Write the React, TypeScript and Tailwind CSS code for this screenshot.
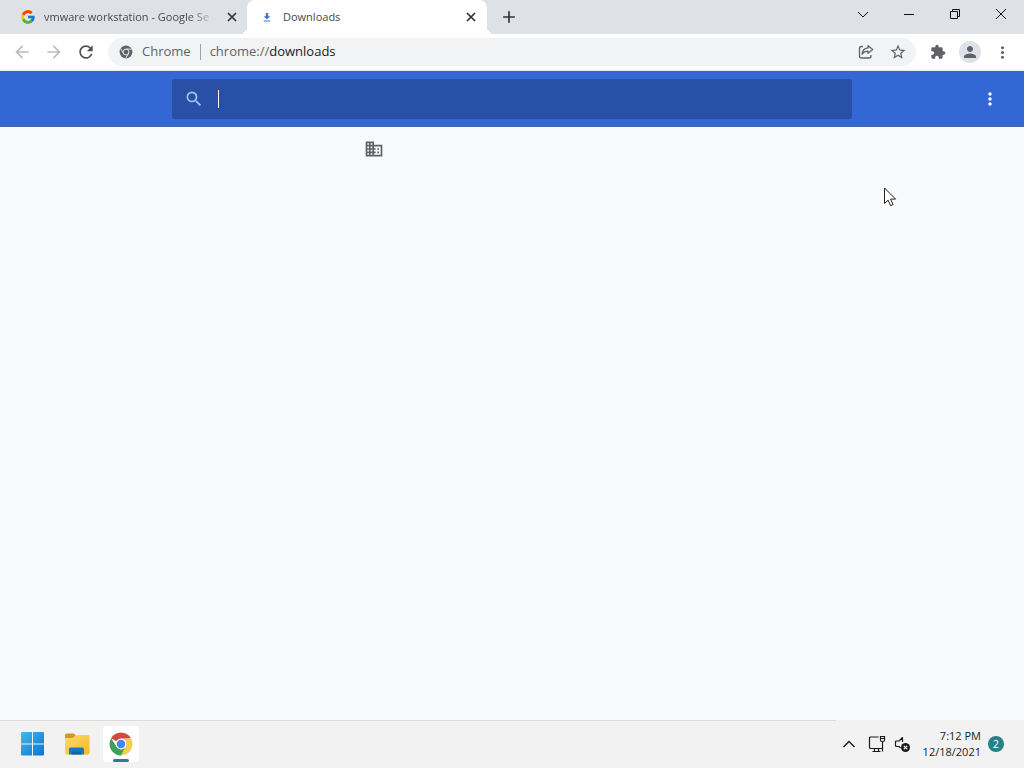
import React from "react";
import { FcGoogle } from "react-icons/fc";
import {
  MdArrowBack,
  MdArrowForward,
  MdDomain,
  MdExtension,
  MdMoreVert,
  MdPerson,
  MdAdd,
  MdRefresh,
  MdSearch,
  MdStarBorder,
} from "react-icons/md";

// Small glyphs
const CloseIcon = () => (
  <svg width="14" height="14" viewBox="0 0 14 14" fill="none" stroke="#303236" strokeWidth="1.700">
    <path d="M3 3 11 11M11 3 3 11" />
  </svg>
);

const ShareIcon = () => (
  <svg width="16" height="16" viewBox="0 0 16 16" fill="none" stroke="#5f6368" strokeWidth="1.3" strokeLinejoin="round">
    <path d="M5 2.500H3.500Q1.500 2.500 1.500 4.500v7.500q0 2 2 2h7.500q2 0 2-2V11" />
    <path d="M10 1.700 14.700 5.500 10 9.300V7.200Q6 7.200 4 10.200 4.500 4.400 10 3.900Z" />
  </svg>
);

const DownloadIcon = () => (
  <svg width="16" height="16" viewBox="0 0 16 16" fill="#3f78c9">
    <path d="M6.800 4h2.400v3.200H11.300L8 10.500 4.700 7.200h2.100zM4.700 11.500h6.600v1H4.700z" />
  </svg>
);

const ChromeGrayIcon = () => (
  <svg width="14" height="14" viewBox="0 0 24 24" fill="none">
    <circle cx="12" cy="12" r="11" fill="#5f6368" />
    <g stroke="#f1f3f4" strokeWidth="1.5">
      <circle cx="12" cy="12" r="5" />
      <path d="M12 7h10M7.700 14.500 2.700 5.800M16.300 14.500l-5 8.700" />
    </g>
    <circle cx="12" cy="12" r="2.800" fill="#5f6368" />
  </svg>
);

const ChromeIcon = () => (
  <svg width="24" height="24" viewBox="0 0 48 48">
    <path d="M24 24 4.100 12.500A23 23 0 0 1 43.900 12.500L24 13.500Z" fill="#d04a40" />
    <path d="M24 13.500h20.400A23 23 0 0 1 24 47L33.100 29.200Z" fill="#f6cc4b" />
    <path d="M4.100 12.500 14.900 29.200 24 34.500 33.100 29.200 24 47A23 23 0 0 1 4.100 12.500Z" fill="#3f9e57" />
    <circle cx="24" cy="24" r="10.800" fill="#fff" />
    <circle cx="24" cy="24" r="8.400" fill="#4285f4" />
  </svg>
);

const WindowsIcon = () => (
  <svg width="24" height="24" viewBox="0 0 24 24">
    <defs>
      <linearGradient id="win" x1="0" y1="0" x2="24" y2="24" gradientUnits="userSpaceOnUse">
        <stop stopColor="#42b8ec" />
        <stop offset="1" stopColor="#0873cc" />
      </linearGradient>
    </defs>
    <path
      d="M1 0H11V11.500H0V1q0-1 1-1ZM12 0h10q1 0 1 1v10.500h-11ZM0 12.500h11V23.500h-10q-1 0-1-1ZM12 12.500h11V22.500q0 1-1 1h-10Z"
      fill="url(#win)"
    />
  </svg>
);

const FolderIcon = () => (
  <svg width="26" height="24" viewBox="0 0 26 24">
    <defs>
      <linearGradient id="folder" x1="0" y1="0" x2="1" y2="1">
        <stop stopColor="#ffdc68" />
        <stop offset="1" stopColor="#f3b929" />
      </linearGradient>
    </defs>
    <path d="M1 3q0-1.500 1.500-1.500h7q1 0 1.500 1l.5 1V7H1Z" fill="#cf9a2c" />
    <path d="M1 6h8l3-3h12q1.500 0 1.500 1.500v16q0 2-1.500 2H2.500q-1.500 0-1.500-2Z" fill="url(#folder)" />
    <path d="M5 22.500v-5.500q0-1.500 1.500-1.500h12q1.500 0 1.500 1.500v5.500Z" fill="#1976c5" />
    <path d="M8 22.500v-2q0-1 1-1h7q1 0 1 1v2Z" fill="#1464ab" />
  </svg>
);

const NetworkIcon = () => (
  <svg width="18" height="18" viewBox="0 0 18 18" fill="none" stroke="#1b1b1b" strokeWidth="1.200">
    <path d="M10.500 2H2.500Q1.500 2 1.500 3v9.500q0 1 1 1h11.500M4.500 16.500h8M6.500 13.500v3M10.500 13.500v3" />
    <path d="M12.500 1.500h4v3.500q0 1.500-1.500 1.500h-1q-1.500 0-1.500-1.500zM12.500 3.500h4M14.500 6.500v10" />
  </svg>
);

const VolumeIcon = () => (
  <svg width="18" height="18" viewBox="0 0 18 18" fill="none" stroke="#1b1b1b" strokeWidth="1.200" strokeLinejoin="round">
    <path d="M8.500 7V2.500L5 6H2.500Q1.500 6 1.500 7v3.500q0 1 1 1H5l1.500 1.700" />
    <circle cx="11.500" cy="12.500" r="4.500" fill="#1b1b1b" stroke="none" />
    <path d="m9.800 10.800 3.400 3.400m0-3.400-3.400 3.400" stroke="#fff" />
  </svg>
);

const windowButtons = [
  { label: "Search tabs", d: "M1 4 6 9 11 4" },
  { label: "Minimize", d: "M1 6.500H11" },
  { label: "Restore", d: "M1.500 3.500h7v7h-7zM3.500 3.500v-2h7v7h-2" },
  { label: "Close", d: "M1 1 11 11M11 1 1 11" },
];

const TabStrip: React.FC = () => (
  <div className="flex h-[34px] bg-[#dee1e6] pl-2">
    <div className="flex w-[239px] items-center pr-2 pl-3">
      <FcGoogle size={16} className="shrink-0" />
      <span className="ml-2 text-[11px] whitespace-nowrap text-[#45484c] [mask-image:linear-gradient(to_right,black_88%,transparent_104%)]">
        vmware workstation - Google Se
      </span>
      <button aria-label="Close tab" className="ml-auto">
        <CloseIcon />
      </button>
    </div>
    <div className="relative flex w-[240px] items-center rounded-t-lg bg-white pr-[9px] pl-3 before:absolute before:bottom-0 before:-left-2 before:size-2 before:rounded-br-lg before:shadow-[4px_4px_0_white] before:[clip-path:inset(0)] after:absolute after:-right-2 after:bottom-0 after:size-2 after:rounded-bl-lg after:shadow-[-4px_4px_0_white] after:[clip-path:inset(0)]">
      <DownloadIcon />
      <span className="ml-2 text-[11px] text-[#45484c]">Downloads</span>
      <button aria-label="Close tab" className="ml-auto">
        <CloseIcon />
      </button>
    </div>
    <button aria-label="New tab" className="ml-3 text-[#303236]">
      <MdAdd size={20} />
    </button>
    <div className="ml-auto flex h-7">
      {windowButtons.map((b) => (
        <button key={b.label} aria-label={b.label} className="flex w-[46px] items-center justify-center">
          <svg width="12" height="12" viewBox="0 0 12 12" fill="none" stroke="#111">
            <path d={b.d} />
          </svg>
        </button>
      ))}
    </div>
  </div>
);

const navButton = "flex size-7 shrink-0 items-center justify-center rounded-full";

const Toolbar: React.FC = () => (
  <div className="flex h-[37px] items-center gap-1 border-b border-[#e3eaf5] bg-white px-2 text-[#5f6368]">
    <button aria-label="Back" className={`${navButton} text-[#babcbe]`}>
      <MdArrowBack size={20} />
    </button>
    <button aria-label="Forward" className={`${navButton} text-[#babcbe]`}>
      <MdArrowForward size={20} />
    </button>
    <button aria-label="Reload" className={`${navButton} text-[#4b4e52]`}>
      <MdRefresh size={20} />
    </button>
    <div className="mx-1 flex h-7 flex-1 items-center rounded-full bg-[#f1f3f4] pr-1 pl-[11px] text-[13px]">
      <ChromeGrayIcon />
      <span className="ml-[9px]">Chrome</span>
      <span className="mx-[9px] h-4 w-px bg-[#9aa0a6]" />
      <span>
        chrome://<span className="text-[#202124]">downloads</span>
      </span>
      <div className="ml-auto flex gap-1">
        <button aria-label="Share" className={navButton}>
          <ShareIcon />
        </button>
        <button aria-label="Bookmark" className={navButton}>
          <MdStarBorder size={18} />
        </button>
      </div>
    </div>
    <button aria-label="Extensions" className={navButton}>
      <MdExtension size={16} />
    </button>
    <button aria-label="Profile" className={navButton}>
      <span className="flex size-[22px] items-center justify-center rounded-full bg-[#dee1e6]">
        <MdPerson size={18} />
      </span>
    </button>
    <button aria-label="Menu" className={navButton}>
      <MdMoreVert size={19} />
    </button>
  </div>
);

const DownloadsHeader: React.FC = () => (
  <header className="grid h-14 grid-cols-[1fr_minmax(0,680px)_1fr] items-center border-b border-[#4a63ab] bg-[#3367d6]">
    <label className="col-start-2 flex h-10 items-center rounded-xs bg-[#2850a7] pl-3">
      <MdSearch size={20} className="text-[#a9c2f4]" />
      <span className="ml-[14px] h-[18px] w-px bg-white" />
      <input
        type="text"
        aria-label="Search downloads"
        className="h-full flex-1 bg-transparent text-sm text-white outline-none"
      />
    </label>
    <button aria-label="More actions" className="mr-6 justify-self-end text-white">
      <MdMoreVert size={20} />
    </button>
  </header>
);

const Taskbar: React.FC = () => (
  <footer className="flex h-12 bg-[#f2f2f2] text-[#1b1b1b]">
    <div className="flex flex-1 items-center gap-2 border-t border-[#d9dbde] pb-px pl-[15px]">
      <button aria-label="Start" className="flex size-9 items-center justify-center">
        <WindowsIcon />
      </button>
      <button aria-label="File Explorer" className="flex size-9 items-center justify-center">
        <FolderIcon />
      </button>
      <button
        aria-label="Google Chrome"
        className="relative flex size-9 items-center justify-center rounded-sm bg-white"
      >
        <ChromeIcon />
        <span className="absolute bottom-0 h-[3px] w-4 rounded-full bg-[#23828a]" />
      </button>
    </div>
    <div className="flex w-[188px] items-center pr-5">
      <button aria-label="Show hidden icons" className="ml-[6px]">
        <svg width="14" height="14" viewBox="0 0 14 14" fill="none" stroke="#1b1b1b" strokeWidth="1.400">
          <path d="M1.500 10 7 4.500 12.500 10" />
        </svg>
      </button>
      <button aria-label="Network" className="ml-3">
        <NetworkIcon />
      </button>
      <button aria-label="Volume" className="ml-2">
        <VolumeIcon />
      </button>
      <div className="ml-auto text-right text-[11px] leading-4 whitespace-nowrap">
        <div>7:12 PM</div>
        <div>12/18/2021</div>
      </div>
      <span className="ml-[7px] flex size-4 items-center justify-center rounded-full bg-[#23828a] text-[11px] text-white">
        2
      </span>
    </div>
  </footer>
);

const App: React.FC = () => {
  return (
    <div className="relative flex min-h-screen flex-col bg-[#f9fafc] font-['Open_Sans','Noto_Sans',sans-serif]">
      <TabStrip />
      <Toolbar />
      <DownloadsHeader />
      <main className="flex-1 pt-3">
        <div className="mx-auto w-[296px]">
          <MdDomain size={20} className="text-[#5f6368]" />
        </div>
      </main>
      <Taskbar />

      {/* Mouse pointer */}
      <svg className="absolute top-[187px] left-[884px]" width="13" height="20" viewBox="0 0 13 20">
        <path
          d="M.5 1v15.500l3.600-3.400 2.500 5.600 2.500-1.100-2.500-5.500h5Z"
          fill="#fff"
          stroke="#222"
        />
      </svg>
    </div>
  );
};

export default App;
